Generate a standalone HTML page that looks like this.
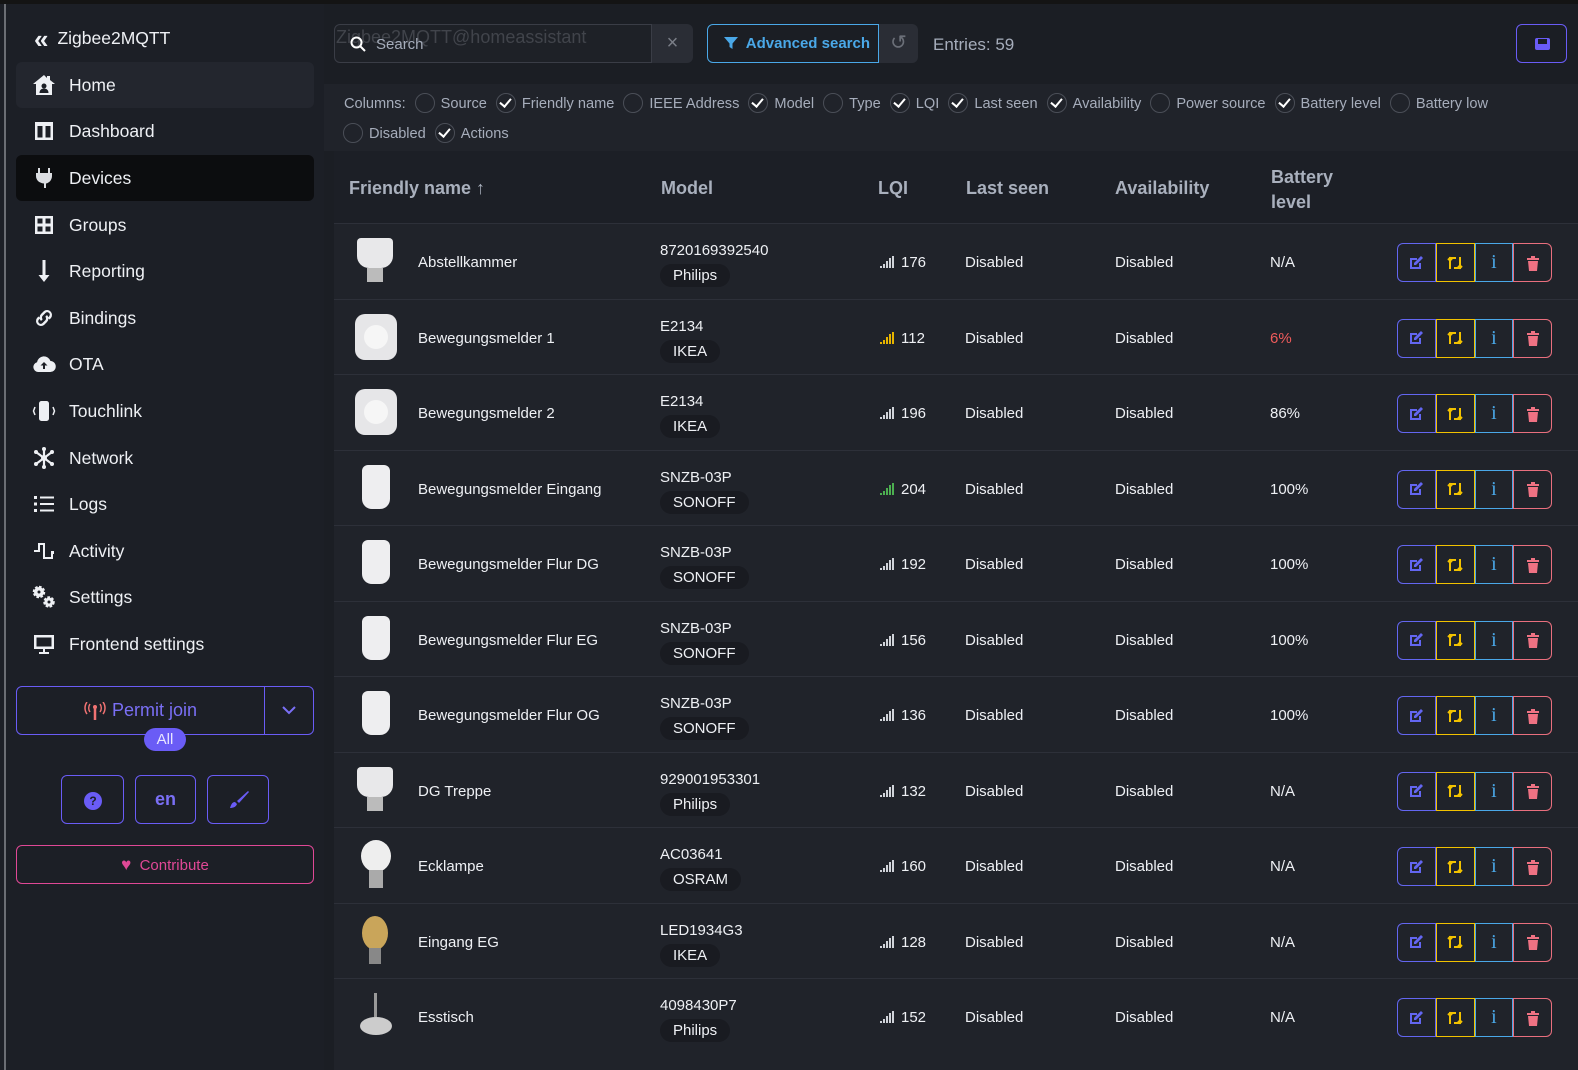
<!DOCTYPE html>
<html><head><meta charset="utf-8"><style>
*{box-sizing:border-box;margin:0;padding:0}
body{width:1578px;height:1070px;overflow:hidden;background:#1b1e24;font-family:"Liberation Sans",sans-serif;color:#e6e8ec;position:relative}
.topbar{position:absolute;left:0;top:0;width:1578px;height:4px;background:#141414}
.edge{position:absolute;left:0;top:4px;width:6px;height:1066px;background:#1d2027;border-right:2px solid #6b6e74}
.side{position:absolute;left:6px;top:4px;width:318px;height:1066px;background:#1c1f26}
.nav{position:absolute;left:16px;width:298px;height:46px;border-radius:6px;display:flex;align-items:center;padding-left:16px;font-size:17.5px;color:#eef0f4}
.nav svg{width:24px;height:24px;margin-right:13px;fill:#eef0f4}
.abs{position:absolute}
.cb{display:inline-block;width:20px;height:20px;border:1.5px solid #4a4e57;border-radius:50%;vertical-align:middle;margin:0 6px 0 9px;position:relative;top:-1px}
.cb.on::after{content:"";position:absolute;left:5px;top:2px;width:5px;height:9px;border:solid #fff;border-width:0 2px 2px 0;transform:rotate(40deg)}
.cols{font-size:14.6px;color:#a6adbb;line-height:30px}
.table{position:absolute;left:334px;top:151px;width:1244px;height:919px;background:#20232a}
.th{position:absolute;font-size:18px;font-weight:bold;color:#a9b0bd}
.row{position:absolute;left:0;width:1244px;height:75.5px;border-top:1px solid #2d3039;font-size:15px;color:#eef0f4}
.row div{position:absolute}
.badge{background:#191b21;border-radius:12px;padding:3px 13px;font-size:15px}
.acts{left:1063px;top:19px;width:155px;height:39px;display:flex}
.acts span{flex:1;border:1px solid;display:flex;align-items:center;justify-content:center}
.acts span:first-child{border-color:#6366f1;border-radius:6px 0 0 6px}
.acts span:nth-child(2){border-color:#f2c200}
.acts span:nth-child(3){border-color:#4aa8e8}
.acts span:last-child{border-color:#e96f7e;border-radius:0 6px 6px 0}
.btn{position:absolute;border:1px solid #6a5cf6;border-radius:6px;color:#7a6ff5}
</style></head><body>
<div class="topbar"></div>
<div class="edge"></div>
<div class="side"></div>
<div class="abs" style="left:34px;top:28px;font-size:17.5px;color:#eef0f4;display:flex;align-items:center"><span style="font-size:26px;font-weight:bold;margin-right:12px;letter-spacing:-3px;line-height:20px">«</span>Zigbee2MQTT</div>

<div class="nav" style="top:62px;background:#23262e"><svg viewBox="0 0 24 24"><path d="M12 2 1 11h3v11h16V11h3L18 7V3h-3v2z"/><circle cx="12" cy="13" r="2.5" fill="#1c1f26"/><path d="M7.5 20c0-3 2-4.5 4.5-4.5s4.5 1.5 4.5 4.5z" fill="#1c1f26"/></svg>Home</div>
<div class="nav" style="top:108px"><svg viewBox="0 0 24 24"><path d="M3 3h18v18H3zM5.5 7v11.5h5V7zm8 0v11.5h5V7z" fill-rule="evenodd"/></svg>Dashboard</div>
<div class="nav" style="top:155px;background:#0c0d0f"><svg viewBox="0 0 24 24"><path d="M6 2h2v5h8V2h2v5h2v3c0 4-3 7-6 7.5V22h-2v-4.5C7 17 4 14 4 10V7h2z" fill="#dcdee2"/></svg>Devices</div>
<div class="nav" style="top:202px"><svg viewBox="0 0 24 24"><path d="M3 3h18v18H3zM5.5 5.5v5h5v-5zm8 0v5h5v-5zm-8 8v5h5v-5zm8 0v5h5v-5z" fill-rule="evenodd"/></svg>Groups</div>
<div class="nav" style="top:248px"><svg viewBox="0 0 24 24"><path d="M10.5 1h3v15h4L12 23l-5.5-7h4z"/></svg>Reporting</div>
<div class="nav" style="top:295px"><svg viewBox="0 0 24 24"><path d="M9 15a5 5 0 0 1 0-7l3-3a5 5 0 0 1 7 7l-1.5 1.5-1.8-1.8 1.5-1.5a2.5 2.5 0 0 0-3.5-3.5l-3 3a2.5 2.5 0 0 0 0 3.5zM15 9a5 5 0 0 1 0 7l-3 3a5 5 0 0 1-7-7l1.5-1.5 1.8 1.8-1.5 1.5a2.5 2.5 0 0 0 3.5 3.5l3-3a2.5 2.5 0 0 0 0-3.5z"/></svg>Bindings</div>
<div class="nav" style="top:341px"><svg viewBox="0 0 24 24"><path d="M6 20a5 5 0 0 1-1-9.8A7 7 0 0 1 18.5 9 5.5 5.5 0 0 1 18 20z"/><path d="M12 10l-3.5 3.5h2.5V17h2v-3.5h2.5z" fill="#1c1f26"/></svg>OTA</div>
<div class="nav" style="top:388px"><svg viewBox="0 0 24 24"><rect x="7" y="2" width="10" height="20" rx="2.5"/><path d="M3 8 1.5 12 3 16M21 8l1.5 4-1.5 4" stroke="#eef0f4" stroke-width="1.5" fill="none"/></svg>Touchlink</div>
<div class="nav" style="top:435px"><svg viewBox="0 0 24 24"><path d="M12 2v20M4 6l16 12M20 6 4 18" stroke="#eef0f4" stroke-width="2.2"/><circle cx="12" cy="12" r="3"/><circle cx="12" cy="3" r="2"/><circle cx="12" cy="21" r="2"/><circle cx="4" cy="6" r="2"/><circle cx="20" cy="18" r="2"/><circle cx="20" cy="6" r="2"/><circle cx="4" cy="18" r="2"/></svg>Network</div>
<div class="nav" style="top:481px"><svg viewBox="0 0 24 24"><path d="M2 4h3v3H2zm0 6.5h3v3H2zM2 17h3v3H2zM8 4.5h14v2H8zm0 6.5h14v2H8zm0 6.5h14v2H8z"/></svg>Logs</div>
<div class="nav" style="top:528px"><svg viewBox="0 0 24 24"><path d="M2 11h4V4h7v14h6v-6h3v3h-1v5h-10V6H8v7H2z"/></svg>Activity</div>
<div class="nav" style="top:574px"><svg viewBox="0 0 24 24"><circle cx="7" cy="7" r="5" stroke="#eef0f4" stroke-width="2.5" stroke-dasharray="2.5 1.4" fill="#eef0f4"/><circle cx="17" cy="17" r="4.5" stroke="#eef0f4" stroke-width="2.5" stroke-dasharray="2.5 1.4" fill="#eef0f4"/><circle cx="7" cy="7" r="1.5" fill="#1c1f26"/><circle cx="17" cy="17" r="1.5" fill="#1c1f26"/></svg>Settings</div>
<div class="nav" style="top:621px"><svg viewBox="0 0 24 24"><path d="M2 3h20v14H13v3h4v2H7v-2h4v-3H2zm2.5 2.5v9h15v-9z" fill-rule="evenodd"/></svg>Frontend settings</div>

<div class="btn" style="left:16px;top:686px;width:298px;height:49px"></div>
<div class="abs" style="left:264px;top:686px;width:1px;height:49px;background:#6a5cf6"></div>
<svg class="abs" style="left:84px;top:702px" width="22" height="18" viewBox="0 0 22 18"><path d="M11 6v12" stroke="#f07272" stroke-width="2.5"/><circle cx="11" cy="5" r="2" fill="#f07272"/><path d="M6 2a7 7 0 0 0 0 8M16 2a7 7 0 0 1 0 8M3 0a10 10 0 0 0 0 12M19 0a10 10 0 0 1 0 12" stroke="#f07272" stroke-width="1.5" fill="none"/></svg>
<div class="abs" style="left:112px;top:700px;font-size:18px;color:#7a6ff5">Permit join</div>
<svg class="abs" style="left:282px;top:706px" width="14" height="9" viewBox="0 0 14 9"><path d="M1 1l6 6 6-6" stroke="#7a6ff5" stroke-width="2" fill="none"/></svg>
<div class="abs" style="left:144px;top:728px;width:42px;height:23px;border-radius:12px;background:#6a5cf6;color:#e8e6ff;font-size:15px;text-align:center;line-height:23px">All</div>
<div class="btn" style="left:61px;top:775px;width:63px;height:49px"><div style="position:absolute;left:22px;top:16px;width:18px;height:18px;border-radius:50%;background:#6a5cf6;color:#1c1f26;font-size:12px;font-weight:bold;text-align:center;line-height:18px">?</div></div>
<div class="btn" style="left:135px;top:775px;width:61px;height:49px;text-align:center;line-height:47px;font-size:18px;font-weight:bold">en</div>
<div class="btn" style="left:207px;top:775px;width:62px;height:49px"><svg style="position:absolute;left:20px;top:14px" width="22" height="20" viewBox="0 0 22 20"><path d="M20 1 9 11l2 2L21 2z" fill="#6a5cf6"/><path d="M7 12c-3 0-4 3-5 6 3 0 6-1 7-4z" fill="#6a5cf6"/></svg></div>
<div class="abs" style="left:16px;top:845px;width:298px;height:39px;border:1px solid #e04896;border-radius:6px;color:#e04896;font-size:15px;text-align:center;line-height:37px"><span style="font-size:17px">♥</span>&nbsp; Contribute</div>

<div class="abs" style="left:334px;top:24px;width:318px;height:39px;border:1px solid #3a3d46;border-radius:6px 0 0 6px;background:#1e2127"></div>
<div class="abs" style="left:336px;top:27px;font-size:18px;color:#41444b">Zigbee2MQTT@homeassistant</div>
<svg class="abs" style="left:350px;top:36px" width="16" height="16" viewBox="0 0 16 16"><circle cx="6.5" cy="6.5" r="5" stroke="#fff" stroke-width="2" fill="none"/><path d="M10 10l5 5" stroke="#fff" stroke-width="2"/></svg>
<div class="abs" style="left:376px;top:36px;font-size:15px;color:#a6adbb">Search</div>
<div class="abs" style="left:652px;top:24px;width:41px;height:39px;background:#2a2d35;border-radius:0 6px 6px 0;color:#7a7e87;font-size:20px;text-align:center;line-height:38px">×</div>
<div class="abs" style="left:707px;top:24px;width:172px;height:39px;border:1px solid #4aa8e8;border-radius:6px 0 0 6px;color:#4aa8e8;font-size:15px;font-weight:bold;line-height:37px;padding-left:16px"><svg width="14" height="14" viewBox="0 0 14 14" style="vertical-align:-2px"><path d="M0 1h14L8.5 7.5V13l-3-2V7.5z" fill="#4aa8e8"/></svg>&nbsp; Advanced search</div>
<div class="abs" style="left:879px;top:24px;width:39px;height:39px;background:#2a2d35;border-radius:0 6px 6px 0;color:#6b6f78;font-size:20px;text-align:center;line-height:38px">↺</div>
<div class="abs" style="left:933px;top:35px;font-size:17px;color:#a6adbb">Entries: 59</div>
<div class="btn" style="left:1516px;top:24px;width:51px;height:39px"><div style="position:absolute;left:18px;top:13px;width:15px;height:12px;background:#6a5cf6;border-radius:2px"></div><div style="position:absolute;left:21px;top:14px;width:9px;height:5px;background:#1b1e24"></div></div>

<div class="abs" style="left:324px;top:84px;width:1254px;height:67px;background:#20232a"></div>
<div class="abs cols" style="left:344px;top:89px">Columns:<span class="cb"></span>Source<span class="cb on"></span>Friendly name<span class="cb"></span>IEEE Address<span class="cb on"></span>Model<span class="cb"></span>Type<span class="cb on"></span>LQI<span class="cb on"></span>Last seen<span class="cb on"></span>Availability<span class="cb"></span>Power source<span class="cb on"></span>Battery level<span class="cb"></span>Battery low</div>
<div class="abs cols" style="left:334px;top:119px"><span class="cb"></span>Disabled<span class="cb on"></span>Actions</div>

<div class="table">
<div style="position:absolute;left:0;top:0;width:1244px;height:72px;background:#1c1f26"></div>
<div class="th" style="left:15px;top:27px">Friendly name ↑</div>
<div class="th" style="left:327px;top:27px">Model</div>
<div class="th" style="left:544px;top:27px">LQI</div>
<div class="th" style="left:632px;top:27px">Last seen</div>
<div class="th" style="left:781px;top:27px">Availability</div>
<div class="th" style="left:937px;top:14px;line-height:25px">Battery<br>level</div>
</div>
<div id="rows"></div>
<script>
var d=[["Abstellkammer","8720169392540","Philips","176","N/A","b"],["Bewegungsmelder 1","E2134","IKEA","112","6%","s"],["Bewegungsmelder 2","E2134","IKEA","196","86%","s"],["Bewegungsmelder Eingang","SNZB-03P","SONOFF","204","100%","p"],["Bewegungsmelder Flur DG","SNZB-03P","SONOFF","192","100%","p"],["Bewegungsmelder Flur EG","SNZB-03P","SONOFF","156","100%","p"],["Bewegungsmelder Flur OG","SNZB-03P","SONOFF","136","100%","p"],["DG Treppe","929001953301","Philips","132","N/A","b"],["Ecklampe","AC03641","OSRAM","160","N/A","l"],["Eingang EG","LED1934G3","IKEA","128","N/A","g"],["Esstisch","4098430P7","Philips","152","N/A","c"]];
var h="";
d.forEach(function(r,i){
var top=223+i*75.5;
var lc=r[3]=="112"?"#e6b400":(r[3]=="204"?"#4caf50":"#d0d3d9");
var img={b:'<div style="left:23px;top:14px;width:36px;height:30px;background:#e8e8ea;border-radius:4px 4px 12px 12px"></div><div style="left:33px;top:44px;width:16px;height:14px;background:#bbb"></div>',
s:'<div style="left:21px;top:14px;width:42px;height:46px;background:#e6e6e8;border-radius:10px"></div><div style="left:30px;top:25px;width:24px;height:24px;background:#f6f6f6;border-radius:50%"></div>',
p:'<div style="left:28px;top:14px;width:28px;height:44px;background:#eeeef0;border-radius:6px 6px 10px 10px"></div>',
l:'<div style="left:27px;top:12px;width:30px;height:32px;background:#eee;border-radius:50%"></div><div style="left:35px;top:42px;width:14px;height:18px;background:#aaa"></div>',
g:'<div style="left:28px;top:12px;width:26px;height:34px;background:#c9a55a;border-radius:50%"></div><div style="left:35px;top:44px;width:12px;height:16px;background:#888"></div>',
c:'<div style="left:40px;top:14px;width:3px;height:24px;background:#999"></div><div style="left:26px;top:38px;width:32px;height:18px;background:#ccc;border-radius:50%"></div>'}[r[5]];
h+='<div class="row" style="left:334px;top:'+top+'px">'+img+
'<div style="left:84px;top:30px">'+r[0]+'</div>'+
'<div style="left:326px;top:18px">'+r[1]+'</div>'+
'<div class="badge" style="left:326px;top:40px">'+r[2]+'</div>'+
'<div style="left:546px;top:31px;width:14px;height:12px"><svg width="14" height="12"><g fill="'+lc+'"><rect x="0" y="10" width="2" height="2"/><rect x="3" y="8" width="2" height="4"/><rect x="6" y="5" width="2" height="7"/><rect x="9" y="2" width="2" height="10"/><rect x="12" y="0" width="2" height="12"/></g></svg></div>'+
'<div style="left:567px;top:30px">'+r[3]+'</div>'+
'<div style="left:631px;top:30px">Disabled</div>'+
'<div style="left:781px;top:30px">Disabled</div>'+
'<div style="left:936px;top:30px;color:'+(r[4]=="6%"?"#ef5b5b":"#eef0f4")+'">'+r[4]+'</div>'+
'<div class="acts"><span><svg width="16" height="16" viewBox="0 0 16 16"><path d="M2 3h7v2H4v7h7V8h2v6H2z" fill="#6366f1"/><path d="M13 1l2 2-7 7H6V8z" fill="#6366f1"/></svg></span><span><svg width="18" height="16" viewBox="0 0 18 16"><path d="M4 14V3h6M14 2v11H8M2 5l2-2 2 2M12 11l2 2 2-2" stroke="#f2c200" stroke-width="2" fill="none"/></svg></span><span style="color:#4aa8e8;font-size:20px;font-family:Liberation Serif,serif">i</span><span><svg width="14" height="16" viewBox="0 0 14 16"><path d="M1 3h12v2H1zM5 1h4v2H5zM2 6h10l-1 10H3z" fill="#ef7283"/></svg></span></div></div>';
});
document.getElementById("rows").innerHTML=h;
</script>
</body></html>
